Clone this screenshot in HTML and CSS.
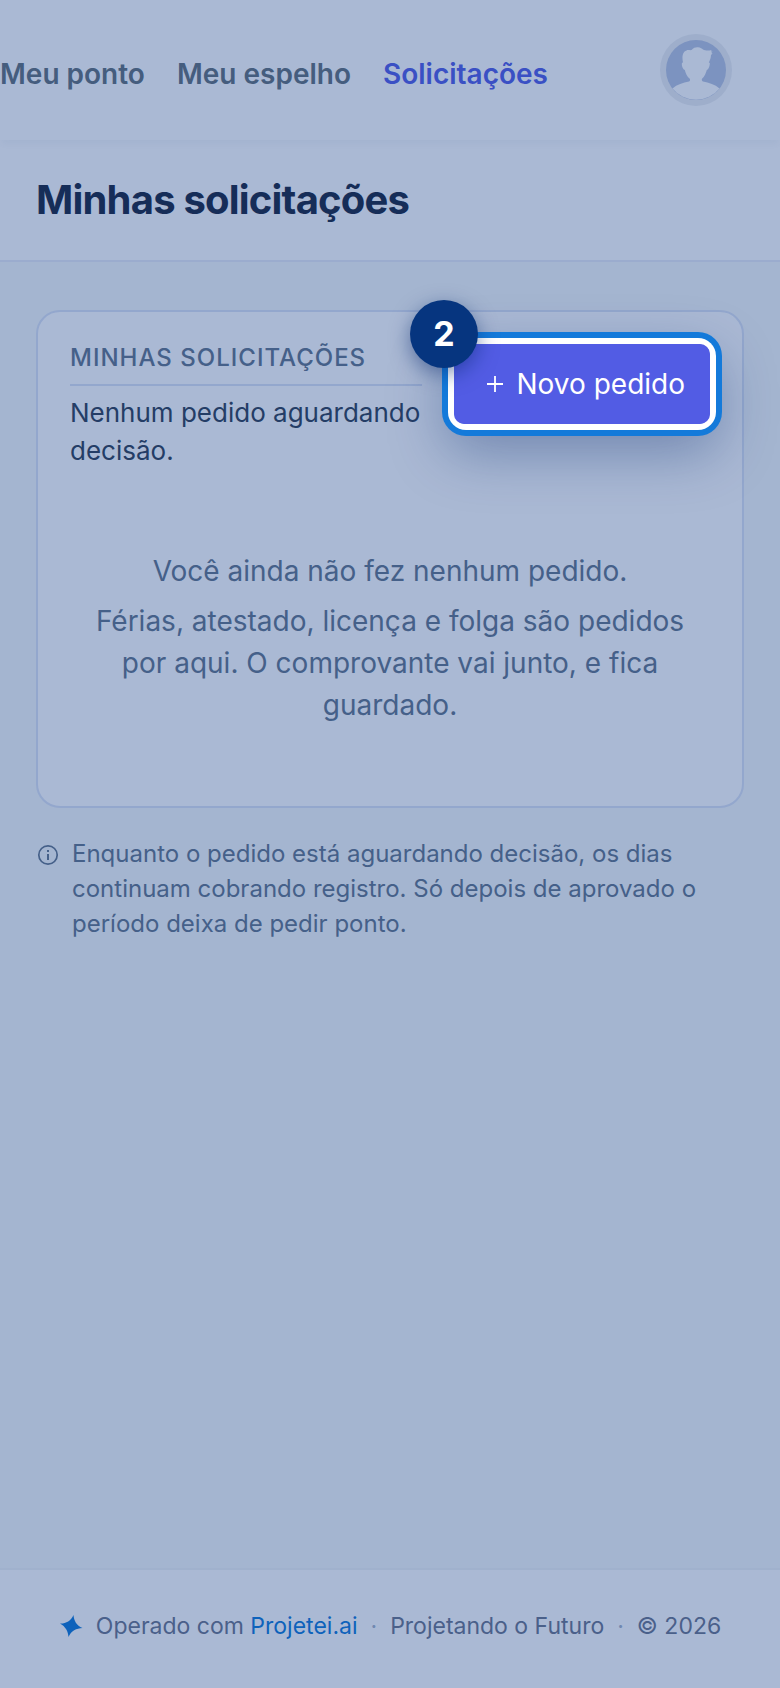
FILE: index.html
```html
<!DOCTYPE html>
<html lang="pt-BR">
<head>
  <meta charset="UTF-8" />
  <meta name="viewport" content="width=device-width, initial-scale=1.0"/>
  <title>Minhas solicitações</title>
  <link rel="stylesheet" href="styles.css">
</head>
<body>

<header class="topbar">
  <nav class="menu">
    <a href="#">Meu ponto</a>
    <a href="#">Meu espelho</a>
    <a href="#" class="active">Solicitações</a>
  </nav>
  <button class="avatar" type="button" aria-label="Perfil">
    <svg viewBox="0 0 60 60" width="60" height="60">
      <circle cx="30" cy="30" r="30" fill="#7c93c0"/>
      <path fill="#aab9d4" d="M6.500 48.500C11 44.500 17 42.500 23 41.500C24 41 24.300 40 23.800 38.800C21 36.500 19.500 33 18.800 30C17 29.500 15.800 26.500 15.800 24C15.800 23 16.300 22.500 17 22.500C16 18 16 12 20.500 10.500C22 9.500 24 10.500 25.500 10C27.500 7.500 30 7 32 7.200C34.500 7.500 36 8.500 37 9.500C39.500 11 43 10.800 45.500 10L45 11.500L46.500 11.500L45.300 13L46.500 13.500L45 15C45 17.500 44 20.500 42.800 22.500C43.600 22.500 44 23 43.800 24C43.500 26.500 42.500 29.500 40.800 30C40 33 38.500 36.500 36 38.800C35.500 40 36 41 37 41.500C43 42.500 49 44.500 53.500 48.500A30 30 0 0 1 6.500 48.500Z"/>
    </svg>
  </button>
</header>

<div class="page-title">
  <h1>Minhas solicitações</h1>
</div>

<main class="content">
  <section class="card">
    <div class="card-head">
      <div class="card-info">
        <h2>MINHAS SOLICITAÇÕES</h2>
        <p>Nenhum pedido aguardando decisão.</p>
      </div>
      <div class="spotlight">
        <button class="new-btn" type="button">
          <svg viewBox="0 0 18 18" width="18" height="18">
            <path d="M9 1v16M1 9h16" stroke="#fff" stroke-width="1.8" fill="none"/>
          </svg>
          Novo pedido
        </button>
        <span class="step">2</span>
      </div>
    </div>
    <div class="empty">
      <p>Você ainda não fez nenhum pedido.</p>
      <p>Férias, atestado, licença e folga são pedidos por aqui. O comprovante vai junto, e fica guardado.</p>
    </div>
  </section>

  <div class="note">
    <svg viewBox="0 0 24 24" width="24" height="24">
      <circle cx="12" cy="12" r="9.200" fill="none" stroke="#456089" stroke-width="1.700"/>
      <path d="M12 11v6M12 7v2" stroke="#456089" stroke-width="2" fill="none"/>
    </svg>
    <p>Enquanto o pedido está aguardando decisão, os dias continuam cobrando registro. Só depois de aprovado o período deixa de pedir ponto.</p>
  </div>
</main>

<footer class="footer">
  <svg viewBox="0 0 24 24" width="24" height="24">
    <path fill="#0e62bb" d="M14.500 1C14.800 6.500 17.500 11.500 23.500 14C17.500 14.200 12 17 9.500 23C9.200 17.500 6.500 12.500 1 9.500C6.500 9.800 12 7 14.500 1Z"/>
  </svg>
  <span>Operado com <a href="#">Projetei.ai</a></span>
  <span class="dot">·</span>
  <span>Projetando o Futuro</span>
  <span class="dot">·</span>
  <span>© 2026</span>
</footer>

</body>
</html>
```

FILE: styles.css
```css
* {
  margin: 0;
  padding: 0;
  box-sizing: border-box;
}

body {
  min-height: 100vh;
  display: flex;
  flex-direction: column;
  background: #a4b5d0;
  color: #456089;
  font-family: Inter, "Liberation Sans", sans-serif;
}

button {
  border: none;
  font-family: inherit;
  cursor: pointer;
}

a {
  text-decoration: none;
}

svg {
  display: block;
  flex-shrink: 0;
}

/* top bar */
.topbar {
  position: relative;
  z-index: 1;
  display: flex;
  align-items: center;
  justify-content: space-between;
  height: 140px;
  padding-right: 48px;
  background: #aab9d4;
  box-shadow: 0 6px 6px -2px rgba(70, 100, 150, 0.06);
}

.menu {
  display: flex;
  gap: 32px;
  padding-top: 8px;
}

.menu a {
  color: #455d7e;
  font-size: 28px;
  font-weight: 600;
  line-height: 40px;
}

.menu a.active {
  color: #3a50c4;
}

.avatar {
  padding: 6px;
  border-radius: 50%;
  background: #9eaecb;
}

.page-title {
  padding: 32px 36px;
  background: #aab9d4;
  border-bottom: 2px solid #9bacce;
}

h1 {
  color: #162d58;
  font-size: 40px;
  font-weight: 700;
  line-height: 56px;
  letter-spacing: -0.02em;
}

/* card */
.content {
  flex: 1;
  padding: 48px 36px;
}

.card {
  padding: 32px;
  background: #aab9d4;
  border: 2px solid #93a7cd;
  border-radius: 24px;
}

.card-head {
  display: flex;
  align-items: flex-start;
  gap: 32px;
}

.card-info {
  flex: 1;
}

h2 {
  margin-bottom: 8px;
  padding-bottom: 12px;
  border-bottom: 2px solid #93a7cd;
  font-size: 24px;
  font-weight: 500;
  line-height: 28px;
  letter-spacing: 1px;
}

.card-info p {
  color: #243d66;
  font-size: 26px;
  line-height: 38px;
}

.spotlight {
  position: relative;
  border-radius: 12px;
  box-shadow: 0 0 0 6px #fff, 0 0 0 12px #147ada, 0 20px 56px 8px rgba(6, 40, 110, 0.35);
}

.new-btn {
  display: flex;
  align-items: center;
  justify-content: flex-end;
  gap: 12px;
  min-width: 256px;
  height: 80px;
  padding: 0 25px;
  border-radius: 10px;
  background: #525ce4;
  color: #fff;
  font-size: 28px;
  font-weight: 400;
  white-space: nowrap;
}

.step {
  position: absolute;
  top: -44px;
  left: -44px;
  width: 68px;
  height: 68px;
  border-radius: 50%;
  background: #06357f;
  box-shadow: 0 6px 20px rgba(6, 40, 110, 0.5);
  color: #fff;
  font-size: 34px;
  font-weight: 700;
  line-height: 68px;
  text-align: center;
}

.empty {
  padding: 80px 16px 48px;
  font-size: 28px;
  line-height: 42px;
  text-align: center;
}

.empty p + p {
  margin-top: 8px;
}

.note {
  display: flex;
  gap: 12px;
  margin-top: 28px;
  font-size: 24px;
  line-height: 35px;
}

.note svg {
  margin-top: 7px;
}

/* footer */
.footer {
  display: flex;
  align-items: center;
  justify-content: center;
  gap: 13px;
  height: 120px;
  padding-bottom: 6px;
  background: #aab9d4;
  border-top: 2px solid #a0b1cd;
  color: #4a608a;
  font-size: 23px;
}

.footer a {
  color: #0e62bb;
}

.dot {
  color: #7088b0;
}
```
